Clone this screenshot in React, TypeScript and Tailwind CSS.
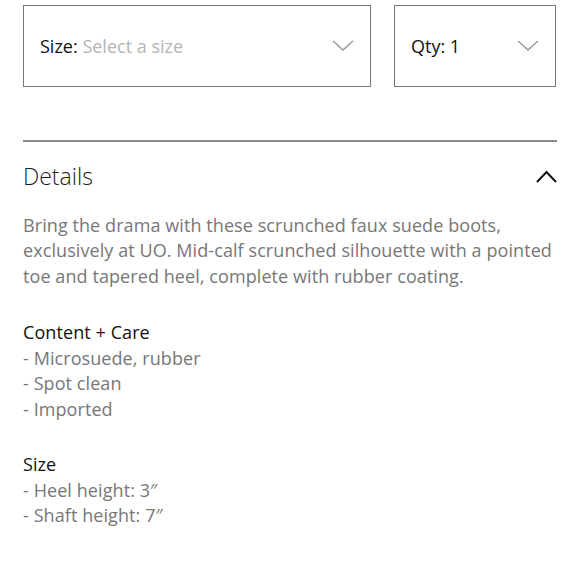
import React from "react";

function ChevronDown() {
  return (
    <svg width="22" height="12" viewBox="0 0 22 12" fill="none">
      <path d="M1 1 L11 10 L21 1" stroke="#9a9a9a" strokeWidth="1.5" />
    </svg>
  );
}

function ChevronUp() {
  return (
    <svg width="21" height="13" viewBox="0 0 21 13" fill="none">
      <path d="M1 12 L10.5 2 L20 12" stroke="#111" strokeWidth="2" />
    </svg>
  );
}

export default function App() {
  return (
    <div className="w-[580px] h-[580px] bg-white px-[23px] pt-[5px]" style={{ fontFamily: "'Open Sans', 'Noto Sans', sans-serif" }}>
      <div className="flex gap-[23px]">
        <div className="w-[348px] h-[82px] border-[1.5px] border-[#777] flex items-center justify-between pl-[16px] pr-[16px]">
          <div className="text-[18px]">
            <span className="text-[#111]">Size:</span>{" "}
            <span className="text-[#b5b5b5]">Select a size</span>
          </div>
          <ChevronDown />
        </div>
        <div className="w-[162px] h-[82px] border-[1.5px] border-[#777] flex items-center justify-between pl-[16px] pr-[16px]">
          <div className="text-[18px] text-[#111]">Qty: 1</div>
          <ChevronDown />
        </div>
      </div>
      <div className="mt-[53px] h-[2px] bg-[#8a8a8a]" />
      <div className="flex items-center justify-between mt-[17px]">
        <div className="text-[23px] text-[#1a1a1a] font-light">Details</div>
        <ChevronUp />
      </div>
      <p className="mt-[19px] text-[18px] leading-[25.5px] tracking-[0.08px] text-[#777]">
        Bring the drama with these scrunched faux suede boots, exclusively at UO. Mid-calf scrunched silhouette with a pointed toe and tapered heel, complete with rubber coating.
      </p>
      <div className="mt-[31px] text-[18px] leading-[25.5px] tracking-[0.08px]">
        <div className="text-[#111]">Content + Care</div>
        <div className="text-[#777]">- Microsuede, rubber</div>
        <div className="text-[#777]">- Spot clean</div>
        <div className="text-[#777]">- Imported</div>
      </div>
      <div className="mt-[30px] text-[18px] leading-[25.5px] tracking-[0.08px]">
        <div className="text-[#111]">Size</div>
        <div className="text-[#777]">- Heel height: 3″</div>
        <div className="text-[#777]">- Shaft height: 7″</div>
      </div>
    </div>
  );
}
